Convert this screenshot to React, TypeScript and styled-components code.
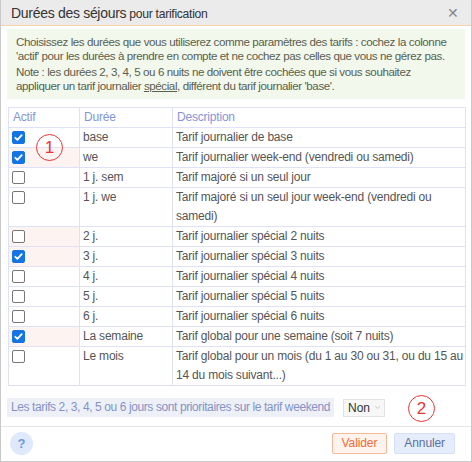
import React from "react";
import styled, { createGlobalStyle } from "styled-components";

const Global = createGlobalStyle`
  html, body { margin: 0; padding: 0; background: #fff; }
  body { font-family: "Liberation Sans", Arial, sans-serif; font-size: 12px; letter-spacing: -0.1px; color: #555; }
  * { box-sizing: border-box; }
`;

const Dialog = styled.div`
  position: relative;
  width: 472px;
  height: 462px;
  border: 1px solid #c9c9c9;
  border-top: none;
  display: flex;
  flex-direction: column;
  background: #fff;
`;

const TitleBar = styled.div`
  height: 26px;
  background: #ebebeb;
  border-bottom: 1px solid #f7d2aa;
  display: flex;
  align-items: center;
  justify-content: space-between;
  padding: 0 12px 0 10px;
`;

const Title = styled.div`
  color: #333;
  font-size: 12.2px;
  letter-spacing: -0.3px;
  b { font-weight: normal; font-size: 14px; }
`;

const Close = styled.span`
  color: #888;
  font-size: 14px;
  line-height: 1;
`;

const Body = styled.div`
  padding: 3px 6px 0 6px;
  display: flex;
  flex-direction: column;
`;

const Info = styled.div`
  background: #f2f8ec;
  color: #5a604f;
  font-size: 11.6px;
  letter-spacing: -0.42px;
  padding: 6px 4px 6px 9px;
  line-height: 14px;
  p { margin: 0; }
  p + p { margin-top: 2px; }
  u { text-decoration: underline; }
`;

const Table = styled.table`
  margin: 8px 1px 0 1px;
  width: 458px;
  border-collapse: collapse;
  border: 1px solid #dfe1f7;
  table-layout: fixed;
  letter-spacing: -0.2px;
`;

const Th = styled.th<{ w?: number }>`
  ${(p) => (p.w ? `width: ${p.w}px;` : "")}
  text-align: left;
  font-weight: normal;
  color: #8494d4;
  border: 1px solid #dfe1f7;
  padding: 0 4px;
  line-height: 19px;
`;

const Td = styled.td<{ pink?: boolean }>`
  border: 1px solid #dfe1f7;
  padding: 0 2px 0 3px;
  line-height: 19px;
  vertical-align: top;
  color: #555;
  white-space: pre-line;
  background: ${(p) => (p.pink ? "#fdf4f1" : "#fff")};
`;

const Box = styled.span<{ on?: boolean }>`
  display: inline-block;
  width: 13px;
  height: 13px;
  margin-top: 3px;
  border-radius: 2px;
  vertical-align: top;
  border: 1px solid ${(p) => (p.on ? "#1474e4" : "#777")};
  background: ${(p) => (p.on ? "#1474e4" : "#fff")};
  svg { display: block; }
`;

const Bottom = styled.div`
  display: flex;
  align-items: center;
  margin-top: 12px;
  gap: 9px;
`;

const Note = styled.div`
  background: #eef0f8;
  color: #8493c4;
  letter-spacing: -0.4px;
  padding: 0 4px;
  line-height: 19px;
`;

const Select = styled.div`
  height: 18px;
  width: 42px;
  border: 1px solid #e2e2e2;
  background: #f7f7f7;
  color: #333;
  display: flex;
  align-items: center;
  padding: 0 4px;
  gap: 5px;
`;

const Footer = styled.div`
  margin-top: auto;
  border-top: 1px solid #e6e6e6;
  height: 35px;
  display: flex;
  align-items: center;
  padding: 0 16px 2px 9px;
`;

const Help = styled.div`
  width: 23px;
  height: 23px;
  border-radius: 50%;
  background: #dfe9fb;
  color: #6b9ad8;
  font-weight: bold;
  font-size: 13px;
  display: flex;
  align-items: center;
  justify-content: center;
`;

const Btn = styled.button<{ kind: "ok" | "cancel" }>`
  height: 21px;
  padding: 0 9px;
  font-family: inherit;
  font-size: 12px;
  letter-spacing: inherit;
  border-radius: 2px;
  border: 1px solid ${(p) => (p.kind === "ok" ? "#f5b899" : "#d6e0f5")};
  background: ${(p) => (p.kind === "ok" ? "#fff3ed" : "#e5edfc")};
  color: ${(p) => (p.kind === "ok" ? "#f26a33" : "#5c6f9c")};
  margin-left: ${(p) => (p.kind === "ok" ? "auto" : "7px")};
`;

const Mark = styled.div`
  position: absolute;
  width: 27px;
  height: 27px;
  border: 1.5px solid #e53535;
  border-radius: 50%;
  color: #e53535;
  font-size: 17px;
  letter-spacing: 0;
  display: flex;
  align-items: center;
  justify-content: center;
`;

const Check = ({ on }: { on?: boolean }) => (
  <Box on={on}>
    {on && (
      <svg width="11" height="11" viewBox="0 0 11 11">
        <path d="M2.3 5.8 L4.4 7.8 L8.7 3.2" stroke="#fff" strokeWidth="1.8" fill="none" strokeLinecap="round" strokeLinejoin="round" />
      </svg>
    )}
  </Box>
);

const rows: { on: boolean; pink: boolean; d: string; desc: string }[] = [
  { on: true, pink: false, d: "base", desc: "Tarif journalier de base" },
  { on: true, pink: true, d: "we", desc: "Tarif journalier week-end (vendredi ou samedi)" },
  { on: false, pink: false, d: "1 j. sem", desc: "Tarif majoré si un seul jour" },
  { on: false, pink: false, d: "1 j. we", desc: "Tarif majoré si un seul jour week-end (vendredi ou\nsamedi)" },
  { on: false, pink: true, d: "2 j.", desc: "Tarif journalier spécial 2 nuits" },
  { on: true, pink: true, d: "3 j.", desc: "Tarif journalier spécial 3 nuits" },
  { on: false, pink: false, d: "4 j.", desc: "Tarif journalier spécial 4 nuits" },
  { on: false, pink: false, d: "5 j.", desc: "Tarif journalier spécial 5 nuits" },
  { on: false, pink: false, d: "6 j.", desc: "Tarif journalier spécial 6 nuits" },
  { on: true, pink: true, d: "La semaine", desc: "Tarif global pour une semaine (soit 7 nuits)" },
  { on: false, pink: false, d: "Le mois", desc: "Tarif global pour un mois (du 1 au 30 ou 31, ou du 15 au\n14 du mois suivant...)" },
];

export default function App() {
  return (
    <>
      <Global />
      <Dialog>
        <TitleBar>
          <Title>
            <b>Durées des séjours</b> pour tarification
          </Title>
          <Close>✕</Close>
        </TitleBar>
        <Body>
          <Info>
            <p>
              Choisissez les durées que vous utiliserez comme paramètres des tarifs : cochez la colonne 'actif' pour les durées à prendre en compte et ne cochez pas celles que vous ne gérez pas.
            </p>
            <p>
              Note : les durées 2, 3, 4, 5 ou 6 nuits ne doivent être cochées que si vous souhaitez
              <br />
              appliquer un tarif journalier <u>spécial</u>, différent du tarif journalier 'base'.
            </p>
          </Info>
          <Table>
            <thead>
              <tr>
                <Th w={71}>Actif</Th>
                <Th w={93}>Durée</Th>
                <Th>Description</Th>
              </tr>
            </thead>
            <tbody>
              {rows.map((r) => (
                <tr key={r.d}>
                  <Td pink={r.pink}>
                    <Check on={r.on} />
                  </Td>
                  <Td>{r.d}</Td>
                  <Td>{r.desc}</Td>
                </tr>
              ))}
            </tbody>
          </Table>
          <Bottom>
            <Note>Les tarifs 2, 3, 4, 5 ou 6 jours sont prioritaires sur le tarif weekend</Note>
            <Select>
              Non
              <svg width="8" height="5" viewBox="0 0 8 5">
                <path d="M0.5 0.5 L4 4 L7.5 0.5" stroke="#aaa" strokeWidth="1" fill="none" />
              </svg>
            </Select>
          </Bottom>
        </Body>
        <Footer>
          <Help>?</Help>
          <Btn kind="ok">Valider</Btn>
          <Btn kind="cancel">Annuler</Btn>
        </Footer>
        <Mark style={{ left: 35, top: 134 }}>1</Mark>
        <Mark style={{ left: 407, top: 395 }}>2</Mark>
      </Dialog>
    </>
  );
}
